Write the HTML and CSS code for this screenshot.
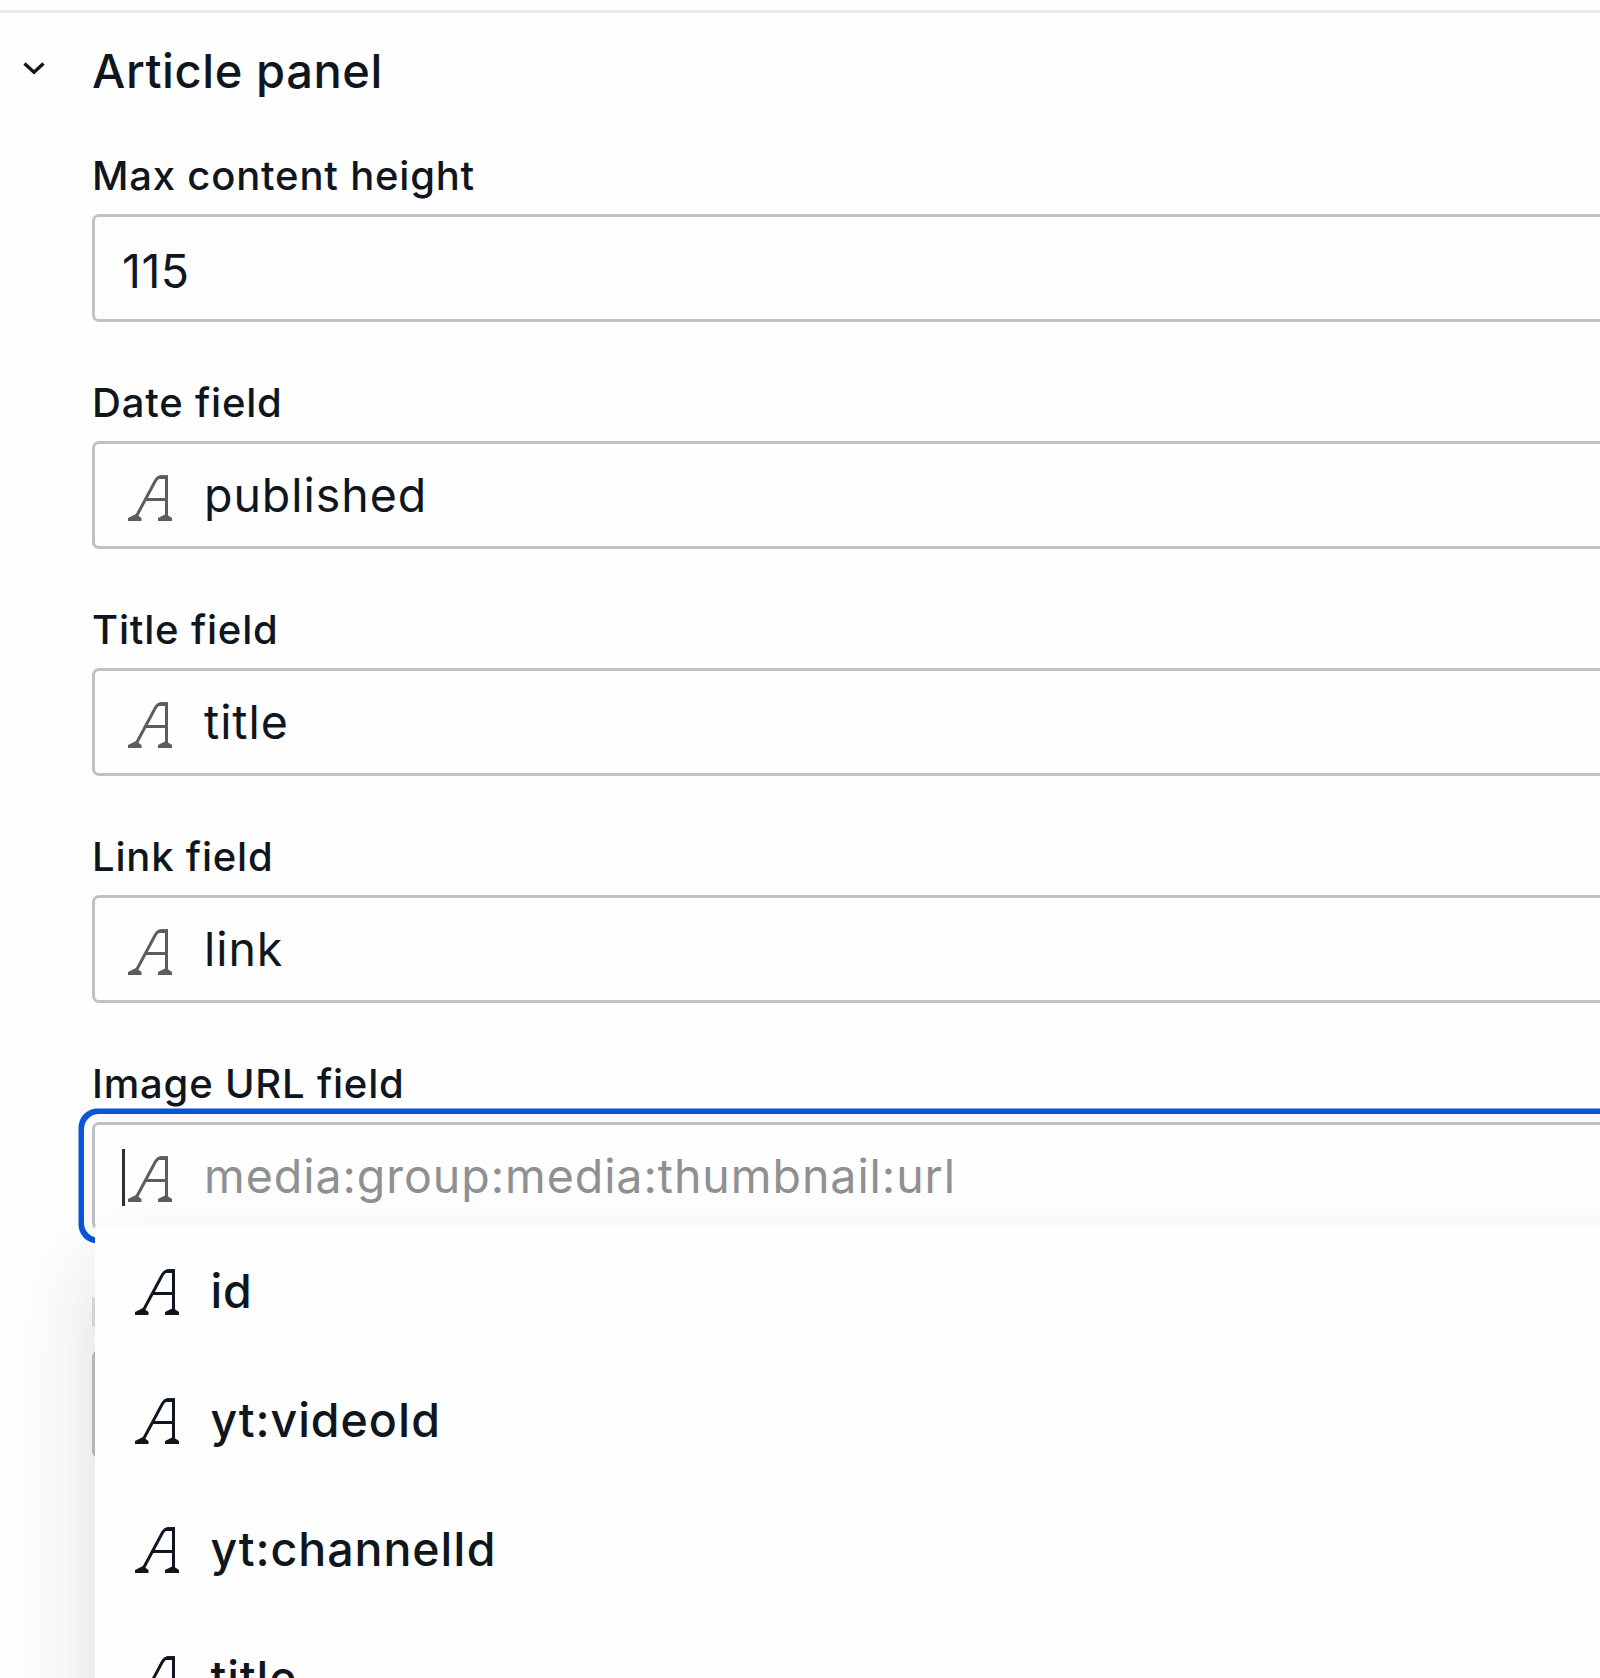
FILE: index.html
```html
<!DOCTYPE html>
<html lang="en">
<head>
<meta charset="utf-8">
<title>Article panel</title>
<link rel="stylesheet" href="styles.css">
</head>
<body>
<svg class="sprite" aria-hidden="true">
  <symbol id="string" viewBox="0 0 46 49">
    <path d="M9 43 28.500 6.500Q31 2.800 34 2.800H39.500V43M19 25.500H39.500" fill="none" stroke="currentColor" stroke-width="3"/>
    <path d="M1 44 9 40 14.500 44V47H1ZM31 44 39 40 45 44V47H31ZM33 1.300H41V5H31Z" fill="currentColor"/>
  </symbol>
</svg>
<main class="panel">
  <header class="panel-header">
    <svg class="chevron" viewBox="0 0 24 14"><path d="M2.500 2.500 12 11.200 21.500 2.500" fill="none" stroke="currentColor" stroke-width="3.400"/></svg>
    <h1 class="panel-title">Article panel</h1>
  </header>
  <section class="fields">
    <div class="field">
      <div class="label">Max content height</div>
      <div class="box number">115</div>
    </div>
    <div class="field">
      <div class="label">Date field</div>
      <div class="box"><svg class="icon"><use href="#string"/></svg><span>published</span></div>
    </div>
    <div class="field">
      <div class="label">Title field</div>
      <div class="box"><svg class="icon"><use href="#string"/></svg><span>title</span></div>
    </div>
    <div class="field">
      <div class="label">Link field</div>
      <div class="box"><svg class="icon"><use href="#string"/></svg><span>link</span></div>
    </div>
    <div class="field">
      <div class="label">Image URL field</div>
      <div class="box focused">
        <i class="caret"></i>
        <svg class="icon"><use href="#string"/></svg><span class="placeholder">media:group:media:thumbnail:url</span>
        <div class="menu">
          <div class="option"><svg class="icon"><use href="#string"/></svg><span>id</span></div>
          <div class="option"><svg class="icon"><use href="#string"/></svg><span>yt:videoId</span></div>
          <div class="option"><svg class="icon"><use href="#string"/></svg><span>yt:channelId</span></div>
          <div class="option"><svg class="icon"><use href="#string"/></svg><span>title</span></div>
        </div>
      </div>
    </div>
    <div class="field">
      <div class="label label-covered"></div>
      <div class="box"></div>
    </div>
  </section>
</main>
</body>
</html>
```
FILE: styles.css
```css
* { box-sizing: border-box; }
html { overflow: hidden; }
body {
  margin: 0;
  background: #fefefe;
  color: #10161d;
  font-family: Inter, "Liberation Sans", sans-serif;
}
.sprite { position: absolute; width: 0; height: 0; }
.panel {
  height: 1678px;
  padding-top: 10px;
  overflow: hidden;
}
.panel-header {
  display: flex;
  align-items: flex-start;
  height: 145px;
  padding: 30px 0 0 22px;
  border-top: 3px solid #e6e8e8;
}
.chevron { width: 24px; height: 14px; margin: 18px 46px 0 0; }
.panel-title {
  margin: 0;
  font-size: 47px;
  line-height: 56px;
  font-weight: 500;
  letter-spacing: 0.6px;
  white-space: nowrap;
}
.fields { padding-left: 92px; }
.field { margin-bottom: 60px; }
.label {
  height: 40px;
  margin-bottom: 19.1px;
  font-size: 40px;
  line-height: 41px;
  font-weight: 500;
  letter-spacing: 0.8px;
  white-space: nowrap;
}
.label-covered { padding-top: 7px; }
.label-covered::before {
  content: "";
  display: block;
  width: 3px;
  height: 30px;
  background: #dfe1e2;
}
.box {
  position: relative;
  display: flex;
  align-items: center;
  width: 1560px;
  height: 108px;
  padding: 0 0 0 32px;
  border: 3px solid #bfc1c2;
  border-radius: 7px;
  background: #fefefe;
  font-size: 46.5px;
  letter-spacing: 0.95px;
  white-space: nowrap;
}
.number { padding: 5px 0 0 27px; letter-spacing: 0.5px; }
.icon {
  flex: none;
  width: 46px;
  height: 49px;
  margin: 6px 31px 0 0;
  color: #5a5e62;
}
.focused { box-shadow: 0 0 0 8px #fbfbfc, 0 0 0 13.500px #0755da; }
.placeholder { color: #8e9092; }
.caret {
  position: absolute;
  left: 27px;
  top: 24px;
  width: 3px;
  height: 57px;
  background: #2c3136;
}
.menu {
  position: absolute;
  z-index: 1;
  left: 0;
  top: 101px;
  width: 1560px;
  height: 900px;
  background: #fefefe;
  box-shadow: 0 43px 78px 3px rgba(24, 30, 32, 0.14);
  font-weight: 500;
  letter-spacing: 0.9px;
}
.option {
  display: flex;
  align-items: center;
  height: 129px;
  padding-left: 38.5px;
}
.option .icon { margin-top: 4px; color: #10161d; }
```
